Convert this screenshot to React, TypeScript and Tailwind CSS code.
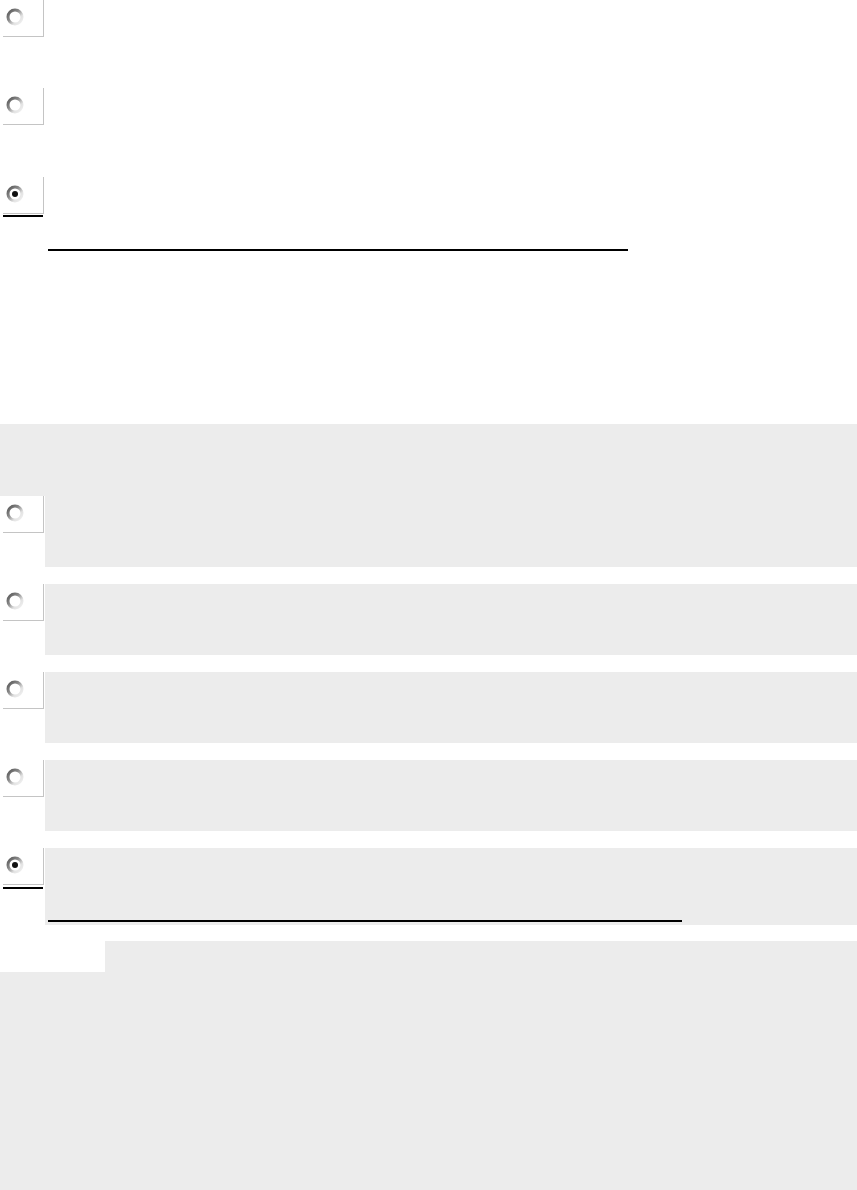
import React from "react";

function Radio({ checked }: { checked?: boolean }) {
  const gid = checked ? "rg-c" : "rg-u";
  return (
    <div className="w-[41px] h-[37px] bg-white border-r border-b border-[#c4c4c4] flex items-start">
      <svg width="18" height="18" viewBox="0 0 18 18" className="ml-[3px] mt-[8px]">
        <defs>
          <linearGradient id={gid} x1="0" y1="0" x2="1" y2="1">
            <stop offset="0" stopColor="#555" />
            <stop offset="0.4" stopColor="#8c8c8c" />
            <stop offset="0.7" stopColor="#e2e2e2" />
            <stop offset="1" stopColor="#f2f2f2" />
          </linearGradient>
        </defs>
        <circle cx="9" cy="9" r="7" fill="#fff" stroke={`url(#${gid})`} strokeWidth="3" />
        {checked && <circle cx="9" cy="9" r="3" fill="#111" />}
      </svg>
    </div>
  );
}

function Row({ checked, last }: { checked?: boolean; last?: boolean }) {
  return (
    <div className={`flex ${last ? "" : "mb-[17px]"}`}>
      <div className="w-[45px] pl-[3px] bg-white">
        <Radio checked={checked} />
        {last && <div className="mt-[2px] h-[2px] w-[40px] bg-black" />}
      </div>
      <div className={`flex-1 bg-[#ececec] ${last ? "h-[77px] pl-[3px] pt-[72px]" : "h-[71px]"}`}>
        {last && <div className="h-[2px] w-[634px] bg-black" />}
      </div>
    </div>
  );
}

export default function App() {
  return (
    <div className="w-[857px] h-[1190px] bg-white overflow-hidden">
      <div className="h-[424px]">
        <div className="pl-[3px] h-[88px]">
          <Radio />
        </div>
        <div className="pl-[3px] h-[89px]">
          <Radio />
        </div>
        <div className="pl-[3px]">
          <Radio checked />
          <div className="mt-[1px] h-[2px] w-[40px] bg-black" />
        </div>
        <div className="ml-[48px] mt-[32px] h-[2px] w-[580px] bg-black" />
      </div>
      <div className="h-[72px] bg-[#ececec]" />
      <Row />
      <Row />
      <Row />
      <Row />
      <Row checked last />
      <div className="h-[16px]" />
      <div className="flex h-[31px]">
        <div className="w-[105px] bg-white" />
        <div className="flex-1 bg-[#ececec]" />
      </div>
      <div className="h-[218px] bg-[#ececec]" />
    </div>
  );
}
